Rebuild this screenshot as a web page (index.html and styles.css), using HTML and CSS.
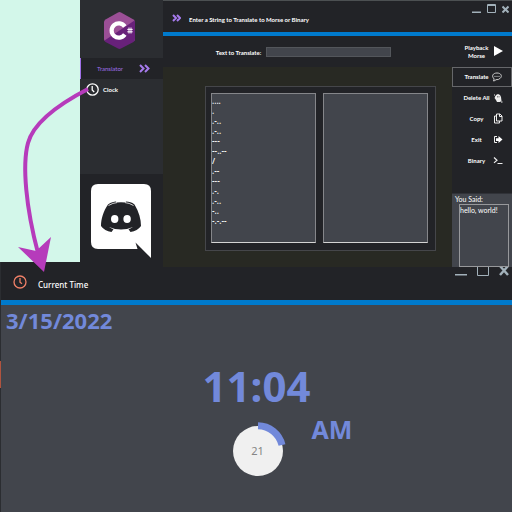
FILE: index.html
```
<!DOCTYPE html>
<html lang="en">
<head>
<meta charset="utf-8">
<title>Morse Translator and Clock</title>
<link rel="stylesheet" href="styles.css">
</head>
<body>
<div class="page">
  <section class="translator">
    <aside class="sidebar">
      <div class="brand">
        <svg width="31" height="37" viewBox="0 0 31 37" role="img" aria-label="C#">
          <path fill="#9b4f96" d="M14 .5q1.500-.8 3 0L29.500 7.500Q31 8.500 31 10V27q0 1-.8 2L.8 29Q0 28 0 27V10Q0 8.500 1.500 7.500z"/>
          <path fill="#68217a" d="M30.500 8.500Q31 9 31 10V27q0 2-1.500 3L17 36.500q-1.500.8-3 0L1.500 30Q.8 29.500.5 28.500z"/>
          <path fill="none" stroke="#fff" stroke-width="4.200" d="M20.800 14.500A7.200 7.200 0 1 0 20.800 22.500"/>
          <path fill="none" stroke="#fff" stroke-width="1" d="M25 15.500v6M27 15.500v6M23.300 17.400h5.400M23.300 19.800h5.400"/>
        </svg>
      </div>
      <nav class="nav">
        <a class="nav-item active" href="#translator"><span>Translator</span>
          <svg width="11" height="9" viewBox="0 0 11 9"><path class="chevron" d="M1 1l3.500 3.500L1 8M6 1l3.500 3.500L6 8"/></svg></a>
        <a class="nav-item clock-item" href="#clock">
          <svg width="13" height="13" viewBox="0 0 13 13"><g fill="none" stroke="#fff" stroke-width="1.300"><circle cx="6.500" cy="6.500" r="5.700"/><path d="M6.200 3v4l2 2"/></g></svg>
          <span>Clock</span></a>
      </nav>
      <div class="discord">
        <svg width="60" height="74" viewBox="0 0 60 74" role="img" aria-label="Discord">
          <path fill="#fff" d="M7 0H53Q60 0 60 7V74L44.500 58.500 46.500 65H7Q0 65 0 58V7Q0 0 7 0z"/>
          <path fill="#222327" d="M17 20.500C20 18.300 23 17.700 25 17.600L25.500 18.600Q30 18 34.500 18.600L35 17.600C38 17.700 41 18.500 43.500 20.500C48 28 50 35 50 42Q46.500 47 39.500 48L37.500 45.300Q40 44.500 42 43Q30 48 18 43Q20 44.500 22.500 45.300L20.500 48Q13.500 47 10 42C10 35 12.500 27 17 20.500z"/>
          <path fill="none" stroke="#fff" stroke-width=".8" d="M17.500 21.500Q22 18.800 26 18.600M42.500 21.500Q38 18.800 34 18.600"/>
          <ellipse cx="23.700" cy="35" rx="3.700" ry="4.100" fill="#fff"/><ellipse cx="36.100" cy="35" rx="3.700" ry="4.100" fill="#fff"/>
        </svg>
      </div>
    </aside>
    <main class="main" id="translator">
      <header class="titlebar">
        <svg width="9" height="8" viewBox="0 0 9 8"><path class="chevron" d="M1 1l3 3-3 3M5 1l3 3-3 3"/></svg>
        <h1>Enter a String to Translate to Morse or Binary</h1>
        <div class="window-buttons">
          <button aria-label="Minimize"><svg width="9" height="9" viewBox="0 0 9 9"><path fill="#a2b1ba" d="M0 7.500h9V9H0z"/></svg></button>
          <button aria-label="Maximize"><svg width="9" height="9" viewBox="0 0 9 9"><path fill="none" stroke="#a2b1ba" d="M.5.5h8v8h-8zM.5 1.500h8"/></svg></button>
          <button aria-label="Close"><svg width="7" height="9" viewBox="0 0 7 9"><path fill="none" stroke="#a2b1ba" stroke-width="2" d="M.5 2.500l6 6M6.500 2.500l-6 6"/></svg></button>
        </div>
      </header>
      <div class="workspace">
        <div class="content">
          <div class="input-row">
            <label for="source">Text to Translate:</label>
            <input id="source" type="text">
          </div>
          <div class="canvas">
            <div class="outputs">
              <textarea class="morse" aria-label="Morse" readonly>....
.
.-..
.-..
---
--..--
/
.--
---
.-.
.-..
-..
-.-.--</textarea>
              <textarea aria-label="Binary output" readonly></textarea>
            </div>
          </div>
        </div>
        <div class="actions">
          <button class="action playback"><span>Playback Morse</span><svg width="10" height="12" viewBox="0 0 10 12"><path fill="#fff" d="M1 0l9 5-9 5z"/></svg></button>
          <button class="action selected"><span>Translate</span><svg width="10" height="10" viewBox="0 0 10 10"><path fill="none" stroke="#ddd" stroke-width=".9" d="M1.500 9l.7-2C-1 4 1 1 5 1s5.500 3 3.300 5.200Q6.500 8 4 7.700 3 8.800 1.500 9z"/><path stroke="#ddd" d="M2.500 4.400h1M4.500 4.400h1M6.500 4.400h1"/></svg></button>
          <button class="action"><span>Delete All</span><svg width="10" height="10" viewBox="0 0 10 10"><path fill="#eee" d="M3 2l2-1 2 1 1 2 .5 4L7 9H4L3 7 1.500 5z"/><path stroke="#eee" d="M1 2h1M2 4h1M8 9h1.500"/><path stroke="#222327" stroke-width=".5" d="M4.500 3v1.500M6 3v1.500"/></svg></button>
          <button class="action"><span>Copy</span><svg width="10" height="11" viewBox="0 0 10 11"><path fill="none" stroke="#eee" d="M3.500 1h3.500l2 2v5H3.500zM3.500 3H1.500v7h5V8M6.500 1v2.500H9"/></svg></button>
          <button class="action"><span>Exit</span><svg width="10" height="10" viewBox="0 0 10 10"><path fill="none" stroke="#eee" d="M4 1.500H1.500v6H4"/><path fill="#fff" d="M3 3.200h2.500V1L9.500 4.500 5.500 8V6H3z"/></svg></button>
          <button class="action"><span>Binary</span><svg width="10" height="10" viewBox="0 0 10 10"><path fill="none" stroke="#eee" stroke-width="1.200" d="M1 1.500l3 2.700-3 2.700M4.500 7.500H9.500"/></svg></button>
          <div class="said">
            <label for="said">You Said:</label>
            <textarea id="said" readonly>hello, world!</textarea>
          </div>
        </div>
      </div>
    </main>
  </section>

  <section class="clock" id="clock">
    <header class="clock-bar">
      <svg width="14" height="14" viewBox="0 0 14 14"><g fill="none" stroke="#f08068" stroke-width="1.300"><circle cx="7" cy="7" r="6"/><path d="M7 3v4.200l2 1.500"/></g></svg>
      <h2>Current Time</h2>
      <div class="window-buttons lower">
        <button aria-label="Minimize"><svg width="12" height="12" viewBox="0 0 12 12"><path fill="#a2b1ba" d="M0 10h12v1.500H0z"/></svg></button>
        <button aria-label="Maximize"><svg width="12" height="12" viewBox="0 0 12 12"><path fill="none" stroke="#a2b1ba" d="M.5.5h11v11H.5z"/></svg></button>
        <button aria-label="Close"><svg width="10" height="12" viewBox="0 0 10 12"><path fill="none" stroke="#a2b1ba" stroke-width="2.500" d="M1 2l8 9M9 2l-8 9"/></svg></button>
      </div>
    </header>
    <div class="clock-body">
      <p class="date">3/15/2022</p>
      <div class="readout">
        <p class="time">11:04</p>
        <div class="seconds" role="img" aria-label="21 seconds">
          <svg width="54" height="54" viewBox="0 0 54 54"><circle cx="25" cy="29" r="25" fill="#f0f0f0"/><path fill="none" stroke="#7289da" stroke-width="7" d="M25 3.800A25 25 0 0 1 49 23"/></svg>
          <span>21</span>
        </div>
        <p class="meridiem">AM</p>
      </div>
    </div>
    <div class="edge"></div>
  </section>

  <svg class="pointer" width="80" height="190" viewBox="0 0 80 190" aria-hidden="true">
    <path fill="none" stroke="#b63bbb" stroke-width="4" d="M70 4C45 17 16 36 10 58C4 80 8 123 20 168"/>
    <path fill="#b63bbb" d="M0 162L18 166 33 152 26 187z"/>
  </svg>
</div>
</body>
</html>
```
FILE: styles.css
```
* { box-sizing: border-box; }
body {
  margin: 0;
  background: #d3f7ea;
  color: #fff;
  font: 6px/10px Lato, sans-serif;
}
h1, h2, p { margin: 0; }
button, input, textarea { font: inherit; color: inherit; margin: 0; border-radius: 0; }
button { padding: 0; border: 0; background: none; }
textarea { display: block; resize: none; overflow: hidden; background: #42454c; }
svg { display: block; flex: none; }
.page { position: relative; display: flex; flex-direction: column; min-height: 100vh; }

.translator {
  display: grid;
  grid-template-columns: 83px 1fr;
  height: 262px;
  margin-left: 80px;
}
.sidebar { display: flex; flex-direction: column; background: #2b2d31; }
.brand { display: flex; justify-content: center; height: 58px; padding: 12px 4px 0 0; }
.nav { flex: 1; }
.nav-item {
  display: flex;
  align-items: center;
  height: 21px;
  color: inherit;
  font-weight: 700;
  text-decoration: none;
}
.active {
  justify-content: space-between;
  padding: 0 13px 0 16px;
  border-left: 1px solid #a070e8;
  background: #222327;
  color: #a070e8;
  font-weight: 400;
}
.clock-item { gap: 4px; padding-left: 6px; }
.chevron { fill: none; stroke: #a77bee; stroke-width: 2; }
.discord { height: 93px; padding: 10px 11px 0; background: #222327; }

.main { display: flex; flex-direction: column; height: 267px; min-width: 0; background: #222327; z-index: 1; }
.titlebar {
  display: flex;
  align-items: center;
  gap: 8px;
  height: 36px;
  padding: 2px 0 0 9px;
  border-top: 1px solid #4c5052;
  border-bottom: 4px solid #007acc;
}
.titlebar h1 { padding-top: 4px; font-size: 6px; font-weight: 700; line-height: 10px; }
.window-buttons { display: flex; gap: 6px; align-self: flex-start; margin-left: auto; padding: 1px 3px 0 0; }
.workspace { display: grid; grid-template-columns: 1fr 60px; flex: 1; min-height: 0; }
.content { display: flex; flex-direction: column; }
.input-row { display: flex; justify-content: center; align-items: center; gap: 5px; height: 31px; padding-right: 8px; font-weight: 700; }
.input-row input { width: 125px; height: 10px; padding: 0 2px; border: 1px solid #53565b; background: #42454c; }
.input-row label { padding-top: 2px; }
.canvas { flex: 1; padding: 19px 16px 16px 42px; background: #282923; }
.outputs {
  display: grid;
  grid-template-columns: 1fr 1fr;
  gap: 7px;
  height: 100%;
  padding: 6px 7px 7px 5px;
  border: 1px solid #45464a;
  background: #222327;
}
.outputs textarea { width: 100%; height: 100%; padding: 2px 0; border: 1px solid #85868a; border-bottom-color: #d4d4d4; }
.outputs .morse { font: 600 8px/10px "Open Sans", sans-serif; }
.actions { display: flex; flex-direction: column; min-height: 0; }
.action { display: flex; align-items: center; justify-content: space-between; height: 21px; padding: 0 9px 0 8px; font-weight: 700; line-height: 8px; }
.action span { flex: 1; text-align: center; }
.playback { height: 31px; }
.selected { height: 20px; border: 1px solid #66676a; }
.said { margin-top: auto; padding: 0 3px; height: 74px; border-top: 1px solid #303238; background: #42454c; font-size: 7px; }
.said textarea { width: calc(100% - 4px); height: 63px; margin-left: 4px; padding: 1px 0; border: 1px solid #97989b; line-height: 8px; }

.clock { display: flex; flex: 1; flex-direction: column; position: relative; background: #42454c; border-left: 1px solid #2b2d31; font-family: "Noto Sans", sans-serif; }
.clock-bar { display: flex; align-items: center; gap: 11px; height: 43px; padding: 2px 0 0 12px; border-bottom: 5px solid #007acc; background: #222327; }
.clock-bar h2 { padding-top: 5px; font: 500 8px/12px "Noto Sans", sans-serif; }
.lower { gap: 10px; padding-top: 0; }
.clock-body { flex: 1; color: #7289da; font-weight: 700; }
.date { padding-left: 5px; font-size: 22px; line-height: 30px; }
.readout { display: grid; grid-template-columns: 1fr 110px 1fr; padding-top: 26px; }
.time { grid-column: 2; font-size: 42px; line-height: 50px; text-align: center; }
.seconds { position: relative; grid-column: 2; grid-row: 2; justify-self: center; padding: 11px 0 0 6px; }
.seconds span { position: absolute; left: 6px; top: 15px; width: 50px; color: #858585; font-size: 11px; font-weight: 400; line-height: 50px; text-align: center; }
.meridiem { grid-column: 3; grid-row: 2; font-size: 25px; line-height: 36px; }
.edge { position: absolute; left: -1px; top: 99px; width: 1px; height: 27px; background: #b0543f; }
.pointer { position: absolute; left: 18px; top: 85px; z-index: 2; }
```
